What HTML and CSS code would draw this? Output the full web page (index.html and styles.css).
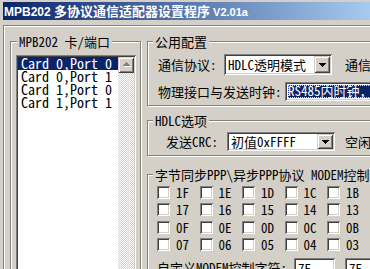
FILE: index.html
```html
<!DOCTYPE html>
<html>
<head>
<meta charset="utf-8">
<link rel="stylesheet" href="styles.css">
</head>
<body>
<div class="window">
  <div class="titlebar"><span class="lat">MPB202 </span>多协议通信适配器设置程序<span class="lat small"> V2.01a</span></div>
  <div class="frame">
    <div class="group cards">
      <span class="legend">MPB202 卡/端口</span>
      <div class="listbox">
        <ul class="items">
          <li class="sel">Card 0,Port 0</li>
          <li>Card 0,Port 1</li>
          <li>Card 1,Port 0</li>
          <li>Card 1,Port 1</li>
        </ul>
        <div class="vscroll">
          <div class="sbtn">
            <svg width="16" height="16" viewBox="0 0 16 16" shape-rendering="crispEdges">
              <g fill="#fff"><rect x="9" y="6" width="1" height="1"/><rect x="8" y="7" width="3" height="1"/><rect x="7" y="8" width="5" height="1"/><rect x="6" y="9" width="7" height="1"/></g>
              <g fill="#808080"><rect x="8" y="5" width="1" height="1"/><rect x="7" y="6" width="3" height="1"/><rect x="6" y="7" width="5" height="1"/><rect x="5" y="8" width="7" height="1"/></g>
            </svg>
          </div>
        </div>
      </div>
    </div>
    <div class="col">
      <div class="group common">
        <span class="legend">公用配置</span>
        <div class="row">
          <span class="lbl w-proto">通信协议:</span>
          <div class="combo tall"><span class="val">HDLC透明模式</span><span class="ddbtn"><svg width="7" height="4" viewBox="0 0 7 4" shape-rendering="crispEdges"><path d="M0 0h7v1H0zM1 1h5v1H1zM2 2h3v1H2zM3 3h1v1H3z" fill="#000"/></svg></span></div>
          <span class="lbl after">通信</span>
        </div>
        <div class="row gap">
          <span class="lbl w-phys">物理接口与发送时钟:</span>
          <div class="field"><span class="hl">RS485内时钟，</span></div>
        </div>
      </div>
      <div class="group hdlc">
        <span class="legend">HDLC选项</span>
        <div class="row">
          <span class="lbl w-crc">发送CRC:</span>
          <div class="combo short"><span class="val">初值0xFFFF</span><span class="ddbtn"><svg width="7" height="4" viewBox="0 0 7 4" shape-rendering="crispEdges"><path d="M0 0h7v1H0zM1 1h5v1H1zM2 2h3v1H2zM3 3h1v1H3z" fill="#000"/></svg></span></div>
          <span class="lbl after2">空闲</span>
        </div>
      </div>
      <div class="group ppp">
        <span class="legend">字节同步PPP\异步PPP协议 MODEM控制字符</span>
        <div class="checks">
          <label class="chk"><span class="box"></span>1F</label>
          <label class="chk"><span class="box"></span>1E</label>
          <label class="chk"><span class="box"></span>1D</label>
          <label class="chk"><span class="box"></span>1C</label>
          <label class="chk"><span class="box"></span>1B</label>
          <label class="chk"><span class="box"></span>1A</label>
          <label class="chk"><span class="box"></span>17</label>
          <label class="chk"><span class="box"></span>16</label>
          <label class="chk"><span class="box"></span>15</label>
          <label class="chk"><span class="box"></span>14</label>
          <label class="chk"><span class="box"></span>13</label>
          <label class="chk"><span class="box"></span>12</label>
          <label class="chk"><span class="box"></span>0F</label>
          <label class="chk"><span class="box"></span>0E</label>
          <label class="chk"><span class="box"></span>0D</label>
          <label class="chk"><span class="box"></span>0C</label>
          <label class="chk"><span class="box"></span>0B</label>
          <label class="chk"><span class="box"></span>0A</label>
          <label class="chk"><span class="box"></span>07</label>
          <label class="chk"><span class="box"></span>06</label>
          <label class="chk"><span class="box"></span>05</label>
          <label class="chk"><span class="box"></span>04</label>
          <label class="chk"><span class="box"></span>03</label>
          <label class="chk"><span class="box"></span>02</label>
        </div>
        <div class="row custom">
          <span class="lbl w-custom">自定义MODEM控制字符:</span>
          <div class="edit">7E</div>
          <div class="edit second">7E</div>
        </div>
      </div>
    </div>
  </div>
</div>
</body>
</html>
```
FILE: styles.css
```css
* { box-sizing: border-box; margin: 0; padding: 0; }
html, body { width: 370px; height: 269px; overflow: hidden; background: #d4d0c8; }
body {
  font-family: "Noto Sans Mono CJK SC", "Liberation Mono", "Noto Sans CJK SC", monospace;
  font-size: 13px;
  line-height: 15px;
  color: #000;
}
.window { width: 560px; height: 269px; padding: 2px 0 0 3px; background: #d4d0c8; }
.titlebar {
  width: 367px; height: 18px; line-height: 18px; padding-left: 1px;
  background: linear-gradient(to right, #0a246a, #a6caf0);
  color: #fff; font-weight: bold; white-space: nowrap;
}
.titlebar .lat { font-family: "Liberation Sans", sans-serif; font-size: 12px; }
.titlebar .lat.small { font-size: 11px; }
.frame {
  display: flex; gap: 6px; margin-top: 5px; height: 260px;
  padding: 15px 0 0 6px;
  border-top: 1px solid #808080; border-left: 1px solid #808080;
  box-shadow: inset 1px 1px #fff;
}
.group {
  position: relative; flex: none;
  border: 1px solid #808080;
  box-shadow: inset 1px 1px #fff, 1px 1px #fff;
}
.legend {
  position: absolute; top: -8px; left: 5px; padding: 0 2px;
  background: #d4d0c8; line-height: 15px; white-space: nowrap;
}
.cards { width: 131px; height: 260px; padding: 13px 0 0 5px; }
.cards .legend { left: 6px; }
.listbox {
  display: flex; width: 120px; height: 230px; padding: 2px; background: #fff;
  box-shadow: inset 1px 1px #808080, inset -1px -1px #fff, inset 2px 2px #404040, inset -2px -2px #d4d0c8;
}
.items { list-style: none; flex: 1; font-size: 14px; }
.items li { height: 13px; line-height: 13px; padding-left: 3px; white-space: nowrap; }
.items li.sel { background: #0a246a; color: #fff; }
.vscroll {
  width: 16px; flex: none;
  background: repeating-conic-gradient(#fff 0 25%, #d4d0c8 0 50%) 0 0 / 2px 2px;
}
.sbtn {
  width: 16px; height: 16px; background: #d4d0c8;
  box-shadow: inset 1px 1px #d4d0c8, inset -1px -1px #404040, inset 2px 2px #fff, inset -2px -2px #808080;
}
.sbtn svg { display: block; }
.col { display: flex; flex-direction: column; width: 320px; flex: none; }
.common { height: 65px; padding: 12px 0 0 10px; }
.row { display: flex; align-items: center; white-space: nowrap; }
.row.gap { margin-top: 7px; }
.lbl { flex: none; }
.w-proto { width: 66px; }
.w-phys { width: 127px; }
.w-crc { width: 61px; }
.w-custom { width: 137px; }
.after { margin-left: 13px; }
.after2 { margin-left: 10px; }
.combo {
  display: flex; align-items: stretch; width: 108px; padding: 2px; background: #fff; flex: none;
  box-shadow: inset 1px 1px #808080, inset -1px -1px #fff, inset 2px 2px #404040, inset -2px -2px #d4d0c8;
}
.combo.tall { height: 21px; }
.combo.short { height: 19px; }
.combo .val { flex: 1; padding-left: 2px; display: flex; align-items: center; }
.ddbtn {
  width: 16px; flex: none; display: flex; align-items: center; justify-content: center;
  background: #d4d0c8;
  box-shadow: inset 1px 1px #d4d0c8, inset -1px -1px #404040, inset 2px 2px #fff, inset -2px -2px #808080;
}
.ddbtn svg { display: block; }
.field {
  width: 200px; height: 19px; padding: 3px 0 3px 3px; background: #fff; flex: none;
  box-shadow: inset 1px 1px #808080, inset -1px -1px #fff, inset 2px 2px #404040, inset -2px -2px #d4d0c8;
}
.hl {
  display: block; height: 13px; line-height: 12px;
  background: #0a246a; color: #fff;
  outline: 1px dotted #e8e890; outline-offset: -1px;
}
.hdlc { margin-top: 14px; height: 36px; padding: 11px 0 0 18px; }
.ppp { margin-top: 18px; height: 120px; padding: 11px 0 0 9px; }
.checks {
  display: grid; grid-template-columns: repeat(6, 42.5px);
  grid-auto-rows: 13px; row-gap: 4.33px;
}
.chk { display: flex; align-items: center; gap: 6px; height: 13px; white-space: nowrap; }
.box {
  width: 13px; height: 13px; flex: none; background: #fff;
  box-shadow: inset 1px 1px #808080, inset -1px -1px #fff, inset 2px 2px #404040, inset -2px -2px #d4d0c8;
}
.custom { margin-top: 7px; }
.edit {
  width: 41px; height: 20px; padding: 3px 0 0 4px; background: #fff; flex: none;
  box-shadow: inset 1px 1px #808080, inset -1px -1px #fff, inset 2px 2px #404040, inset -2px -2px #d4d0c8;
}
.edit.second { margin-left: 10px; }
```
